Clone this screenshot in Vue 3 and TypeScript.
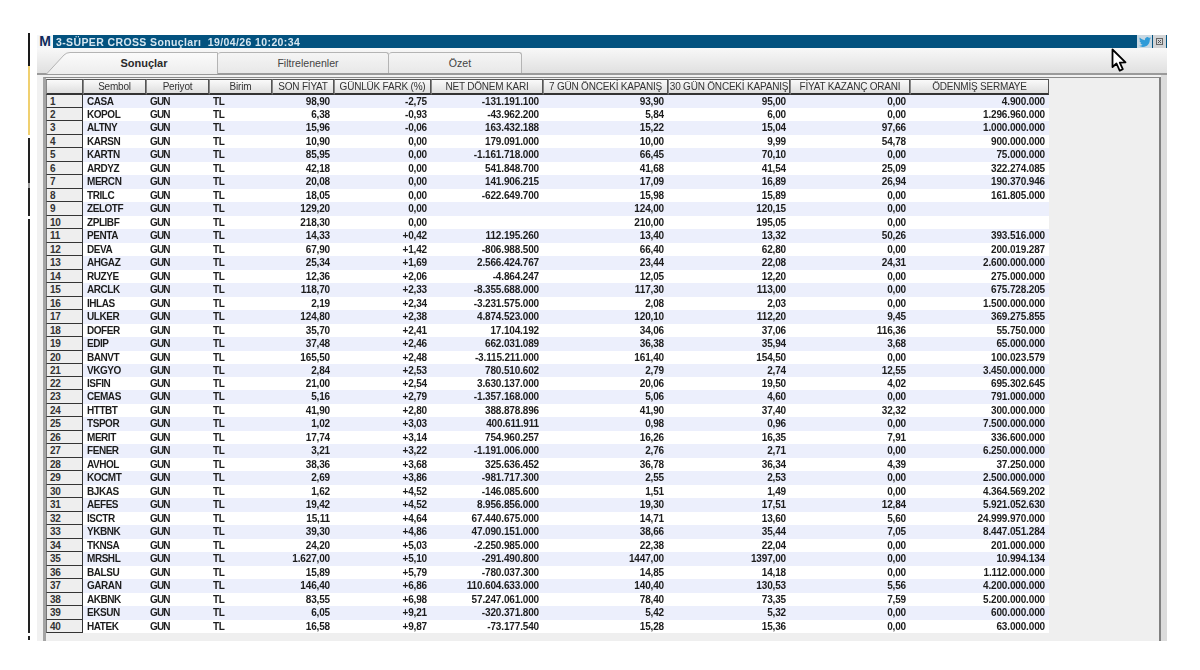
<script setup lang="ts">
const headers: string[] = ['', 'Sembol', 'Periyot', 'Birim', 'SON FİYAT', 'GÜNLÜK FARK (%)', 'NET DÖNEM KARI', '7 GÜN ÖNCEKİ KAPANIŞ', '30 GÜN ÖNCEKİ KAPANIŞ', 'FİYAT KAZANÇ ORANI', 'ÖDENMİŞ SERMAYE']

const raw = `CASA|98,90|-2,75|-131.191.100|93,90|95,00|0,00|4.900.000
KOPOL|6,38|-0,93|-43.962.200|5,84|6,00|0,00|1.296.960.000
ALTNY|15,96|-0,06|163.432.188|15,22|15,04|97,66|1.000.000.000
KARSN|10,90|0,00|179.091.000|10,00|9,99|54,78|900.000.000
KARTN|85,95|0,00|-1.161.718.000|66,45|70,10|0,00|75.000.000
ARDYZ|42,18|0,00|541.848.700|41,68|41,54|25,09|322.274.085
MERCN|20,08|0,00|141.906.215|17,09|16,89|26,94|190.370.946
TRILC|18,05|0,00|-622.649.700|15,98|15,89|0,00|161.805.000
ZELOTF|129,20|0,00||124,00|120,15|0,00|
ZPLIBF|218,30|0,00||210,00|195,05|0,00|
PENTA|14,33|+0,42|112.195.260|13,40|13,32|50,26|393.516.000
DEVA|67,90|+1,42|-806.988.500|66,40|62,80|0,00|200.019.287
AHGAZ|25,34|+1,69|2.566.424.767|23,44|22,08|24,31|2.600.000.000
RUZYE|12,36|+2,06|-4.864.247|12,05|12,20|0,00|275.000.000
ARCLK|118,70|+2,33|-8.355.688.000|117,30|113,00|0,00|675.728.205
IHLAS|2,19|+2,34|-3.231.575.000|2,08|2,03|0,00|1.500.000.000
ULKER|124,80|+2,38|4.874.523.000|120,10|112,20|9,45|369.275.855
DOFER|35,70|+2,41|17.104.192|34,06|37,06|116,36|55.750.000
EDIP|37,48|+2,46|662.031.089|36,38|35,94|3,68|65.000.000
BANVT|165,50|+2,48|-3.115.211.000|161,40|154,50|0,00|100.023.579
VKGYO|2,84|+2,53|780.510.602|2,79|2,74|12,55|3.450.000.000
ISFIN|21,00|+2,54|3.630.137.000|20,06|19,50|4,02|695.302.645
CEMAS|5,16|+2,79|-1.357.168.000|5,06|4,60|0,00|791.000.000
HTTBT|41,90|+2,80|388.878.896|41,90|37,40|32,32|300.000.000
TSPOR|1,02|+3,03|400.611.911|0,98|0,96|0,00|7.500.000.000
MERIT|17,74|+3,14|754.960.257|16,26|16,35|7,91|336.600.000
FENER|3,21|+3,22|-1.191.006.000|2,76|2,71|0,00|6.250.000.000
AVHOL|38,36|+3,68|325.636.452|36,78|36,34|4,39|37.250.000
KOCMT|2,69|+3,86|-981.717.300|2,55|2,53|0,00|2.500.000.000
BJKAS|1,62|+4,52|-146.085.600|1,51|1,49|0,00|4.364.569.202
AEFES|19,42|+4,52|8.956.856.000|19,30|17,51|12,84|5.921.052.630
ISCTR|15,11|+4,64|67.440.675.000|14,71|13,60|5,60|24.999.970.000
YKBNK|39,30|+4,86|47.090.151.000|38,66|35,44|7,05|8.447.051.284
TKNSA|24,20|+5,03|-2.250.985.000|22,38|22,04|0,00|201.000.000
MRSHL|1.627,00|+5,10|-291.490.800|1447,00|1397,00|0,00|10.994.134
BALSU|15,89|+5,79|-780.037.300|14,85|14,18|0,00|1.112.000.000
GARAN|146,40|+6,86|110.604.633.000|140,40|130,53|5,56|4.200.000.000
AKBNK|83,55|+6,98|57.247.061.000|78,40|73,35|7,59|5.200.000.000
EKSUN|6,05|+9,21|-320.371.800|5,42|5,32|0,00|600.000.000
HATEK|16,58|+9,87|-73.177.540|15,28|15,36|0,00|63.000.000`

interface Row {
  no: number
  symbol: string
  values: string[]
}

const rows: Row[] = raw.split('\n').map((line, i) => {
  const [symbol, ...values] = line.split('|')
  return { no: i + 1, symbol, values }
})
</script>

<template>
  <div class="page">
    <div class="strip"></div>
    <div class="window">
      <div class="titlebar">
        <span class="logo">M</span>
        <span class="title">3-SÜPER CROSS Sonuçları&nbsp; 19/04/26 10:20:34</span>
        <span class="tw">
          <svg width="14" height="12" viewBox="0 0 24 24"><path fill="#2f9bd8" d="M23.953 4.57a10 10 0 01-2.825.775 4.958 4.958 0 002.163-2.723c-.951.555-2.005.959-3.127 1.184a4.92 4.92 0 00-8.384 4.482C7.69 8.095 4.067 6.13 1.64 3.162a4.822 4.822 0 00-.666 2.475c0 1.71.87 3.213 2.188 4.096a4.904 4.904 0 01-2.228-.616v.06a4.923 4.923 0 003.946 4.827 4.996 4.996 0 01-2.212.085 4.936 4.936 0 004.604 3.417 9.867 9.867 0 01-6.102 2.105c-.39 0-.779-.023-1.17-.067a13.995 13.995 0 007.557 2.209c9.053 0 13.998-7.496 13.998-13.985 0-.21 0-.42-.015-.63A9.935 9.935 0 0024 4.59z"/></svg>
        </span>
        <span class="close">
          <svg width="7" height="7" viewBox="0 0 7 7"><rect x=".5" y=".5" width="6" height="6" fill="none" stroke="#666"/><path d="M2 2l3 3M5 2L2 5" stroke="#555"/></svg>
        </span>
      </div>

      <div class="tabbar">
        <div class="tab tab-active">
          <svg class="tab-shape" width="172" height="22" viewBox="0 0 172 22">
            <path d="M0.5 22 L18 3 Q20.5 .5 24 .5 L171.5 .5 L171.5 22" fill="url(#tabfill)" stroke="#b4b4b4"/>
            <defs>
              <linearGradient id="tabfill" x1="0" y1="0" x2="0" y2="1">
                <stop offset="0" stop-color="#fbfbfb"/>
                <stop offset="1" stop-color="#ededed"/>
              </linearGradient>
            </defs>
          </svg>
          <span class="tab-label">Sonuçlar</span>
        </div>
        <div class="tab tab-plain tab-two">Filtrelenenler</div>
        <div class="tab tab-plain tab-three">Özet</div>
      </div>

      <div class="panel">
        <div class="sheet">
          <div class="grid-row head">
            <div v-for="(h, i) in headers" :key="i" class="hcell">{{ h }}</div>
          </div>
          <div v-for="r in rows" :key="r.no" class="grid-row data">
            <div class="rowno">{{ r.no }}</div>
            <div class="cell left sym">{{ r.symbol }}</div>
            <div class="cell left per">GUN</div>
            <div class="cell left sym">TL</div>
            <div v-for="(v, j) in r.values" :key="j" class="cell right">{{ v }}</div>
          </div>
        </div>
      </div>

      <svg class="cursor" width="17" height="25" viewBox="0 0 17 25">
        <path d="M1.5 1.5 L1.5 19 L5.5 15.5 L8.7 22.6 L11.8 21.2 L8.8 14.6 L14.5 14.4 Z" fill="#fff" stroke="#000" stroke-width="1.8" stroke-linejoin="round"/>
      </svg>
    </div>
  </div>
</template>

<style>
html, body {
  margin: 0;
  background: #fff;
}
</style>

<style scoped>
.page {
  width: 1200px;
  height: 670px;
  display: flex;
  padding-top: 35px;
  box-sizing: border-box;
  overflow: hidden;
  background: #fff;
  font-family: "Liberation Sans", Arial, sans-serif;
}
.strip {
  width: 2px;
  height: 607px;
  margin: -2px 7px 0 28px;
  flex: none;
  background: linear-gradient(to bottom,
    #1a1a1a 0, #1a1a1a 33px,
    #f0d070 33px, #f0d070 102px,
    #fff 102px, #fff 105px,
    #222 105px, #222 150px,
    #999 150px, #999 155px,
    #222 155px, #222 183px,
    #fff 183px, #fff 186px,
    #222 186px, #222 600px,
    #fff 600px, #fff 603px,
    #222 603px);
}
.window {
  position: relative;
  width: 1130px;
  height: 606px;
  flex: none;
  display: flex;
  flex-direction: column;
  background: linear-gradient(to right, #f1f1f1 0, #f1f1f1 1124px, #dcdcdc 1124px);
}
.titlebar {
  height: 13px;
  flex: none;
  display: flex;
  align-items: center;
  background: #03527f;
}
.logo {
  width: 16px;
  height: 13px;
  background: #f4f6f8;
  color: #0d2a5a;
  font-weight: bold;
  font-size: 14px;
  line-height: 13px;
  text-align: center;
}
.title {
  margin-left: 3px;
  color: #d6e6f0;
  font-weight: bold;
  font-size: 10.5px;
  letter-spacing: 0.38px;
  white-space: pre;
  flex: 1;
  filter: blur(0.25px);
}
.tw {
  width: 15px;
  height: 13px;
  background: #c9d8e2;
  display: flex;
  align-items: center;
  justify-content: center;
}
.close {
  width: 13px;
  height: 13px;
  margin-left: 1px;
  margin-right: 1px;
  background: #d2d4d6;
  display: flex;
  align-items: center;
  justify-content: center;
}
.tabbar {
  height: 27px;
  flex: none;
  display: flex;
  align-items: flex-end;
  padding-left: 9px;
  box-sizing: border-box;
  background: linear-gradient(to bottom, #f8f8f8, #e0e0e0);
  border-bottom: 2px solid #9a9a9a;
}
.tab {
  height: 21px;
  box-sizing: border-box;
  display: flex;
  align-items: center;
  justify-content: center;
}
.tab-active {
  position: relative;
  width: 172px;
  padding-left: 24px;
  font-weight: bold;
  font-size: 11px;
  color: #2a2a2a;
}
.tab-shape {
  position: absolute;
  left: 0;
  top: 0;
}
.tab-label {
  position: relative;
}
.tab-plain {
  font-size: 10.6px;
  color: #444;
  padding-left: 10px;
  border: 1px solid #b4b4b4;
  border-bottom: 0;
  border-left: 0;
  border-radius: 3px 3px 0 0;
  background: linear-gradient(to bottom, #f5f5f5, #e8e8e8);
}
.tab-two { width: 171px; }
.tab-three { width: 133px; }
.panel {
  margin: 2px 6px 0 6px;
  flex: 1;
  box-sizing: border-box;
  background: #efefef;
  border-top: 1px solid #8a8a8a;
  border-left: 3px solid #a4a4a4;
  border-right: 2px solid #808080;
  padding-top: 1px;
}
.sheet {
  width: 1003px;
  filter: blur(0.3px);
}
.grid-row {
  display: grid;
  grid-template-columns: 37px 63px 63px 63px 62px 97px 112px 125px 122px 120px 139px;
}
.head {
  height: 16px;
}
.hcell {
  box-sizing: border-box;
  border: 1px solid #555;
  border-left-color: #888;
  border-bottom: 2px solid #333;
  background: linear-gradient(to bottom, #fafafa, #dedede);
  font-size: 10px;
  letter-spacing: -0.2px;
  color: #333;
  line-height: 13px;
  text-align: center;
  white-space: nowrap;
  overflow: hidden;
}
.data {
  height: 13px;
  background: #fff;
}
.data:nth-of-type(even) {
  height: 14px;
  background: #eceffc;
}
.data:nth-of-type(20n+2) {
  height: 13px;
}
.rowno {
  box-sizing: border-box;
  background: #eeeeee;
  border: 1px solid #333;
  border-top: 0;
  border-left-color: #777;
  padding-left: 3px;
  padding-top: 1px;
  font-size: 10px;
  letter-spacing: -0.3px;
  font-weight: bold;
  color: #333;
  line-height: 11px;
}
.cell {
  font-size: 10px;
  letter-spacing: -0.15px;
  font-weight: bold;
  color: #1c1c1c;
  line-height: 13px;
  white-space: nowrap;
  overflow: hidden;
}
.left {
  text-align: left;
  padding-left: 4px;
}
.sym {
  letter-spacing: -0.45px;
}
.per {
  letter-spacing: -0.9px;
}
.right {
  text-align: right;
  padding-right: 4px;
}
.cursor {
  position: absolute;
  left: 1074px;
  top: 13px;
}
</style>
